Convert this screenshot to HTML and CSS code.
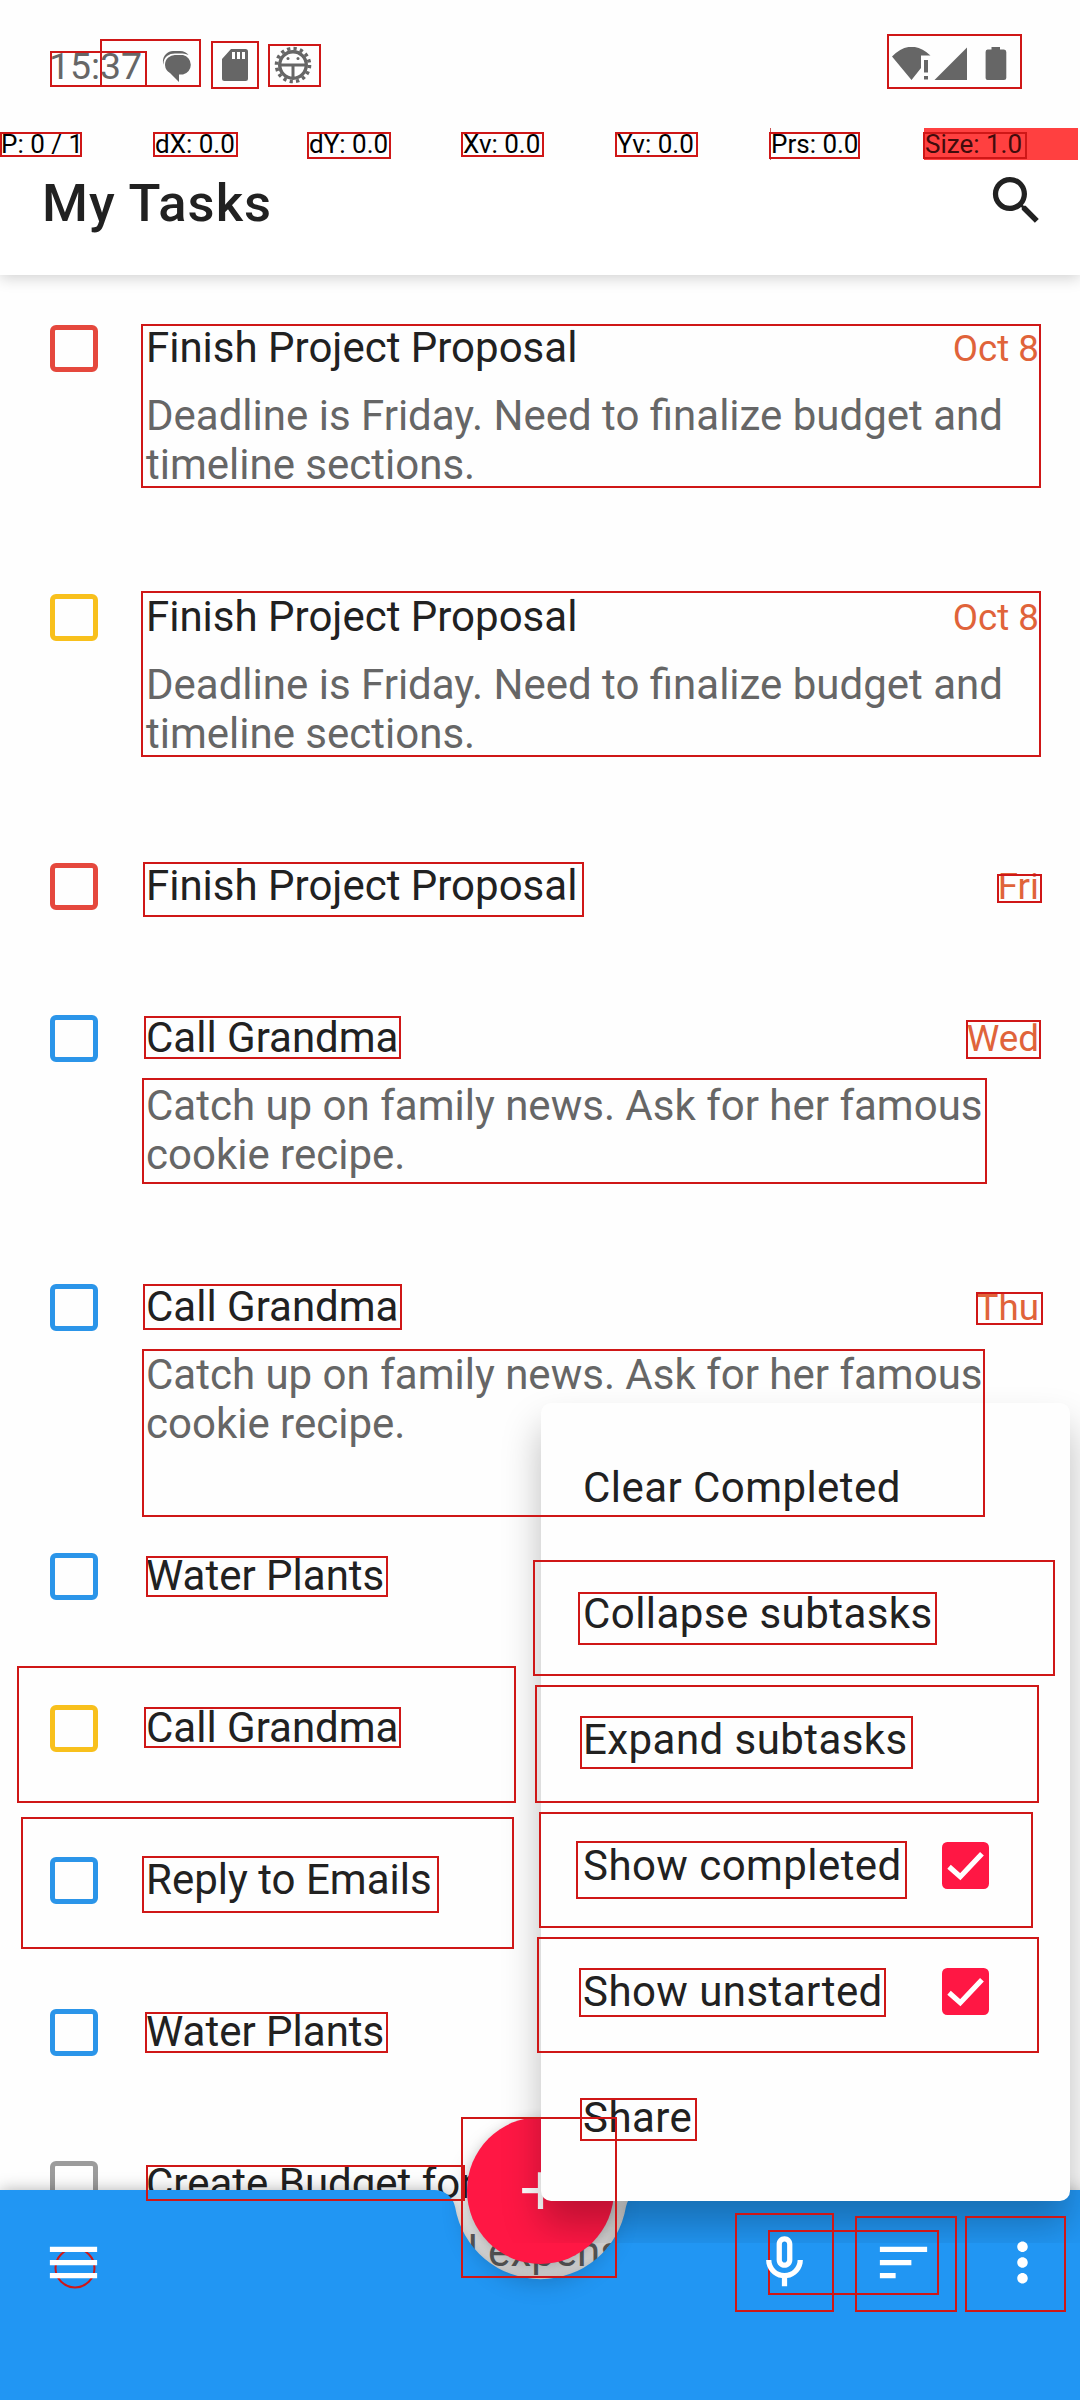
FILE: index.html
```html
<!DOCTYPE html>
<html lang="en">
<head>
<meta charset="utf-8">
<title>My Tasks</title>
<link rel="stylesheet" href="styles.css">
</head>
<body>
<div class="screen">
  <div class="status">
    <span class="clock">15:37</span>
    <svg class="i-chat" width="32" height="31" viewBox="0 0 32 31"><path d="M14 4H21A10 10 0 0 1 21 23.500H17V31L8 22A10 10 0 0 1 3 14A10 10 0 0 1 14 4Z"/><path d="M1.500 14C-1 6 5 0 11 0H18C22 0 25 2 26.500 4C22 2 19 2.500 13 2.500C7 2.500 1 6 1.500 14Z"/></svg>
    <svg class="i-sd" width="26" height="32" viewBox="0 0 26 32"><path fill-rule="evenodd" d="M9 0H23.500Q26 0 26 2.500V29.500Q26 32 23.500 32H2.500Q0 32 0 29.500V10ZM10 3V10H13V3ZM15 3V10H18V3ZM20 3V10H23V3Z"/></svg>
    <svg class="i-gear" width="38" height="38" viewBox="0 0 38 38"><circle cx="19" cy="19" r="16.500" fill="none" stroke="#666" stroke-width="3.600" stroke-dasharray="3.240 3.240"/><circle cx="19" cy="19" r="13.300" fill="none" stroke="#666" stroke-width="3.400"/><path d="M5 17.500H33V20.500H20.500V33H17.500V20.500H5Z"/><circle cx="14" cy="12.500" r="1.500"/><circle cx="24" cy="12.500" r="1.500"/></svg>
    <svg class="i-net" width="116" height="34" viewBox="0 0 116 34"><path d="M0 9.500Q19 -9.500 38.500 8.500H29V21L19.500 33Z"/><path d="M32 13H36V25.500H32ZM32 29H36V32.500H32ZM42.500 33L75 .5V33Z"/><path d="M99.500 0H108V2.500H112Q114.300 2.500 114.300 5V31Q114.300 33 112 33H95.500Q93.600 33 93.600 31V5Q93.600 2.500 95.500 2.500H99.500Z"/></svg>
  </div>
  <div class="debug">
    <span>P: 0 / 1</span><span>dX: 0.0</span><span>dY: 0.0</span><span>Xv: 0.0</span><span>Yv: 0.0</span><span class="prs">Prs: 0.0</span><span class="size">Size: 1.0</span>
  </div>
  <header class="appbar">
    <h1>My Tasks</h1>
    <svg class="search" width="63" height="63" viewBox="0 0 24 24"><path d="M15.500 14h-.79l-.28-.27C15.410 12.590 16 11.110 16 9.500 16 5.910 13.090 3 9.500 3S3 5.910 3 9.500 5.910 16 9.500 16c1.610 0 3.090-.59 4.230-1.570l.27.28v.79l5 4.990L20.490 19l-4.990-5zm-6 0C7.010 14 5 11.990 5 9.500S7.010 5 9.500 5 14 7.010 14 9.500 11.990 14 9.500 14z"/></svg>
  </header>
  <main class="list">
    <article class="task tall red"><i class="box"></i><h2>Finish Project Proposal</h2><time>Oct 8</time><p>Deadline is Friday. Need to finalize budget and timeline sections.</p></article>
    <article class="task tall yellow"><i class="box"></i><h2>Finish Project Proposal</h2><time>Oct 8</time><p>Deadline is Friday. Need to finalize budget and timeline sections.</p></article>
    <article class="task red"><i class="box"></i><h2>Finish Project Proposal</h2><time>Fri</time></article>
    <article class="task tall blue"><i class="box"></i><h2>Call Grandma</h2><time>Wed</time><p>Catch up on family news. Ask for her famous cookie recipe.</p></article>
    <article class="task tall blue"><i class="box"></i><h2>Call Grandma</h2><time>Thu</time><p>Catch up on family news. Ask for her famous cookie recipe.</p></article>
    <article class="task blue"><i class="box"></i><h2>Water Plants</h2></article>
    <article class="task yellow"><i class="box"></i><h2>Call Grandma</h2></article>
    <article class="task blue"><i class="box"></i><h2>Reply to Emails</h2></article>
    <article class="task blue"><i class="box"></i><h2>Water Plants</h2></article>
    <article class="task tall gray"><i class="box"></i><h2>Create Budget for</h2><p class="tail">d expens</p></article>
  </main>

  <nav class="bottom">
    <svg class="bar" width="1080" height="210" viewBox="0 0 1080 210"><path d="M0 0H434.500A21 21 0 0 1 455.100 16.900A86.600 86.600 0 0 0 625.900 16.900A21 21 0 0 1 646.500 0H1080V210H0Z"/></svg>
    <div class="actions">
      <svg width="63" height="63" viewBox="0 0 24 24"><path d="M3 18h18v-2H3v2zm0-5h18v-2H3v2zm0-7v2h18V6H3z"/></svg>
      <span class="grow"></span>
      <svg width="63" height="63" viewBox="0 0 24 24"><path d="M12 14c1.660 0 3-1.340 3-3V5c0-1.660-1.340-3-3-3S9 3.340 9 5v6c0 1.660 1.340 3 3 3zM11 5c0-.55.45-1 1-1s1 .45 1 1v6c0 .55-.45 1-1 1s-1-.45-1-1V5zM17 11c0 2.760-2.240 5-5 5s-5-2.240-5-5H5c0 3.530 2.610 6.430 6 6.920V21h2v-3.080c3.390-.49 6-3.390 6-6.920h-2z"/></svg>
      <svg width="63" height="63" viewBox="0 0 24 24"><path d="M3 18h6v-2H3v2zM3 6v2h18V6H3zm0 7h12v-2H3v2z"/></svg>
      <svg width="63" height="63" viewBox="0 0 24 24"><path d="M12 8c1.100 0 2-.9 2-2s-.9-2-2-2-2 .9-2 2 .9 2 2 2zm0 2c-1.100 0-2 .9-2 2s.9 2 2 2 2-.9 2-2-.9-2-2-2zm0 6c-1.100 0-2 .9-2 2s.9 2 2 2 2-.9 2-2-.9-2-2-2z"/></svg>
    </div>
    <div class="pill"></div>
  </nav>
  <div class="fab"><svg width="63" height="63" viewBox="0 0 24 24"><path d="M19 13h-6v6h-2v-6H5v-2h6V5h2v6h6v2z"/></svg></div>

  <div class="menu">
    <div class="item">Clear Completed</div>
    <div class="item">Collapse subtasks</div>
    <div class="item">Expand subtasks</div>
    <div class="item">Show completed<svg width="47" height="47" viewBox="0 0 18 18"><rect width="18" height="18" rx="2"/><path d="M2.700 9.500L7 13.300L15.300 4.500"/></svg></div>
    <div class="item">Show unstarted<svg width="47" height="47" viewBox="0 0 18 18"><rect width="18" height="18" rx="2"/><path d="M2.700 9.500L7 13.300L15.300 4.500"/></svg></div>
    <div class="item">Share</div>
  </div>

  <svg class="marks" width="1080" height="2400" viewBox="0 0 1080 2400">
    <rect x="51" y="52" width="95" height="34"/><rect x="101" y="40" width="99" height="46"/><rect x="212" y="42" width="46" height="46"/><rect x="269" y="45" width="51" height="41"/><rect x="888" y="35" width="133" height="53"/>
    <rect x="1" y="133" width="80" height="23"/><rect x="154" y="133" width="83" height="23"/><rect x="308" y="133" width="82" height="25"/><rect x="462" y="133" width="81" height="23"/><rect x="616" y="133" width="81" height="23"/><rect x="770" y="133" width="89" height="25"/><rect x="924" y="133" width="102" height="25"/>
    <rect x="43" y="177" width="237" height="63"/><rect x="976" y="167" width="83" height="70"/>
    <rect x="142" y="325" width="898" height="162"/><rect x="142" y="592" width="898" height="164"/>
    <rect x="144" y="863" width="439" height="53"/><rect x="998" y="875" width="43" height="27"/>
    <rect x="145" y="1017" width="255" height="41"/><rect x="967" y="1021" width="73" height="37"/><rect x="143" y="1079" width="843" height="104"/>
    <rect x="144" y="1285" width="257" height="44"/><rect x="977" y="1293" width="65" height="31"/><rect x="143" y="1350" width="841" height="166"/>
    <rect x="147" y="1557" width="240" height="39"/><rect x="18" y="1667" width="497" height="135"/><rect x="145" y="1708" width="255" height="39"/>
    <rect x="22" y="1818" width="491" height="130"/><rect x="143" y="1857" width="295" height="55"/><rect x="146" y="2013" width="241" height="39"/>
    <rect x="534" y="1561" width="520" height="114"/><rect x="579" y="1593" width="357" height="51"/><rect x="536" y="1686" width="502" height="116"/><rect x="581" y="1717" width="331" height="51"/>
    <rect x="540" y="1813" width="492" height="114"/><rect x="577" y="1842" width="329" height="56"/><rect x="538" y="1938" width="500" height="114"/><rect x="580" y="1969" width="305" height="47"/><rect x="581" y="2099" width="115" height="41"/>
    <rect x="147" y="2166" width="317" height="34"/><rect x="462" y="2118" width="154" height="159"/>
    <rect x="736" y="2214" width="97" height="97"/><rect x="769" y="2231" width="169" height="63"/><rect x="856" y="2217" width="100" height="94"/><rect x="966" y="2217" width="99" height="94"/>
    <circle cx="75" cy="2268" r="19.500"/>
  </svg>
</div>
</body>
</html>
```
FILE: styles.css
```css
* { box-sizing: border-box; }
body { margin: 0; background: #fefefe; font-family: Roboto, "Liberation Sans", sans-serif; color: #212121; }
svg { display: block; flex: none; }
.screen { position: relative; width: 1080px; height: 2400px; overflow: hidden; display: flex; flex-direction: column; }

.status { height: 128px; display: flex; align-items: flex-start; padding-left: 49px; padding-right: 72px; flex: none; fill: #666; }
.clock { font-size: 37.400px; line-height: 44px; margin-top: 44px; color: #666; width: 113px; }
.i-chat { margin-top: 51px; }
.i-sd { margin: 49px 0 0 28px; }
.i-gear { margin: 46px 0 0 26px; }
.i-net { margin: 47px 0 0 auto; }

.debug { height: 32px; flex: none; display: grid; grid-template-columns: repeat(7, 154px); font-size: 26px; line-height: 32px; color: #000; }
.debug span { padding-left: 1px; }
.debug .prs { box-shadow: inset 1px 0 #c55; }
.debug .size { background: #ff4040; color: #400c0c; }

.appbar { height: 115px; flex: none; display: flex; justify-content: space-between; padding: 9px 32px 0 42px; background: #fff; box-shadow: 0 3px 14px rgba(0, 0, 0, .18); clip-path: inset(0 0 -30px 0); z-index: 1; }
h1 { margin: 3px 0 0; font-size: 52.500px; line-height: 62px; font-weight: 500; letter-spacing: 1.050px; }
.search { fill: #212121; }

.list { flex: 1; min-height: 0; padding-top: 24px; }
.task { height: 152px; display: grid; grid-template-columns: 96px 1fr auto; grid-template-rows: 49px 98px; row-gap: 19px; align-content: start; padding: 24px 41px 0 50px; }
.tall { height: 269px; }
.box { width: 47.500px; height: 47px; margin-top: 2px; border: 5px solid; border-radius: 6px; }
.red .box { color: #e5483d; }
.yellow .box { color: #f8c01c; }
.blue .box { color: #2b95e9; }
.gray .box { color: #9c9c9c; }
h2 { margin: 0; font-size: 42px; line-height: 49px; font-weight: 400; }
time { font-size: 36.750px; line-height: 43px; margin-top: 4px; color: #e0633a; }
.task p { grid-column: 2 / 4; margin: 0; font-size: 42px; line-height: 49px; color: #666; }
.task .tail { padding-left: 308px; }

.bottom { position: absolute; left: 0; bottom: 0; width: 1080px; height: 210px; display: grid; }
.bottom > * { grid-area: 1 / 1; }
.bar { fill: #2196f3; filter: drop-shadow(0 0 8px rgba(0, 0, 0, .3)); }
.actions { display: flex; gap: 56px; padding: 41px 26px 0 42px; fill: #fff; z-index: 1; }
.grow { flex: 1; }
.pill { place-self: end center; width: 284px; height: 11px; margin-bottom: 26px; border-radius: 6px; background: #0b3d63; }

.fab { position: absolute; left: 467px; top: 2117px; width: 147px; height: 147px; border-radius: 50%; background: #ff1744; fill: #fff; display: grid; place-items: center; box-shadow: 0 16px 26px rgba(0, 0, 0, .24), 0 2px 12px rgba(0, 0, 0, .14); }

.menu { position: absolute; left: 541px; top: 1403px; width: 529px; height: 798px; padding: 21px 81px 21px 42px; border-radius: 10px; background: #fefefe; box-shadow: 0 24px 38px rgba(0, 0, 0, .26); clip-path: inset(-50px -20px -42px -60px); }
.item { height: 126px; display: flex; align-items: center; justify-content: space-between; font-size: 42px; line-height: 49px; letter-spacing: .44px; }
.item rect { fill: #ff1744; }
.item path { fill: none; stroke: #fff; stroke-width: 2; }

.marks { position: absolute; left: 0; top: 0; fill: none; stroke: #cf1717; stroke-width: 2; }
```
